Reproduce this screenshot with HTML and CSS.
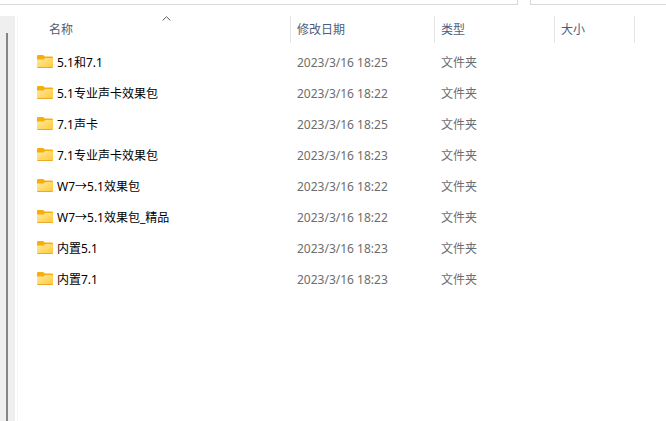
FILE: index.html
```html
<!DOCTYPE html>
<html lang="zh-CN">
<head>
  <meta charset="UTF-8">
  <meta name="viewport" content="width=device-width, initial-scale=1.0">
  <title>文件夹</title>
  <link rel="stylesheet" href="styles.css">
</head>
<body>
  <svg class="defs" aria-hidden="true">
    <defs>
      <linearGradient id="front" x1="0" y1="0" x2="1" y2="1">
        <stop offset="0" stop-color="#ffe9a0"/>
        <stop offset="1" stop-color="#ffc936"/>
      </linearGradient>
      <symbol id="folder" viewBox="0 0 16 13">
        <path fill="#f5ae0c" d="M0 1.2Q0 0 1.2 0H5.6Q6.3 0 6.8.6L7.8 1.6H14.8Q16 1.6 16 2.8V6H0Z"/>
        <path fill="url(#front)" d="M0 4.4H6Q6.6 4.4 7.1 3.9L7.6 3.4Q8 3 8.6 3H15Q16 3 16 4V11.8Q16 13 14.8 13H1.2Q0 13 0 11.8Z"/>
        <path fill="#e8a92c" d="M.1 12.1H15.9Q15.7 13 14.8 13H1.2Q.3 13 .1 12.1Z"/>
      </symbol>
    </defs>
  </svg>

  <header class="topbar">
    <div class="address"></div>
    <div class="search"></div>
  </header>

  <div class="window">
    <aside class="sidebar">
      <div class="thumb"></div>
    </aside>
    <main class="content">
      <table class="files">
        <colgroup>
          <col class="col-name">
          <col class="col-date">
          <col class="col-type">
          <col class="col-size">
          <col>
        </colgroup>
        <thead>
          <tr>
            <th class="name" aria-sort="ascending">
              <button type="button">名称</button>
              <svg class="sort" viewBox="0 0 9 5" aria-hidden="true"><path d="M.6 4.5L4.5.7L8.4 4.5"/></svg>
            </th>
            <th><button type="button">修改日期</button></th>
            <th><button type="button">类型</button></th>
            <th><button type="button">大小</button></th>
            <td></td>
          </tr>
        </thead>
        <tbody>
          <tr>
            <td class="name"><svg class="icon"><use href="#folder"/></svg>5.1和7.1</td>
            <td>2023/3/16 18:25</td>
            <td>文件夹</td>
            <td></td>
            <td></td>
          </tr>
          <tr>
            <td class="name"><svg class="icon"><use href="#folder"/></svg>5.1专业声卡效果包</td>
            <td>2023/3/16 18:22</td>
            <td>文件夹</td>
            <td></td>
            <td></td>
          </tr>
          <tr>
            <td class="name"><svg class="icon"><use href="#folder"/></svg>7.1声卡</td>
            <td>2023/3/16 18:25</td>
            <td>文件夹</td>
            <td></td>
            <td></td>
          </tr>
          <tr>
            <td class="name"><svg class="icon"><use href="#folder"/></svg>7.1专业声卡效果包</td>
            <td>2023/3/16 18:23</td>
            <td>文件夹</td>
            <td></td>
            <td></td>
          </tr>
          <tr>
            <td class="name"><svg class="icon"><use href="#folder"/></svg>W7→5.1效果包</td>
            <td>2023/3/16 18:22</td>
            <td>文件夹</td>
            <td></td>
            <td></td>
          </tr>
          <tr>
            <td class="name"><svg class="icon"><use href="#folder"/></svg>W7→5.1效果包_精品</td>
            <td>2023/3/16 18:22</td>
            <td>文件夹</td>
            <td></td>
            <td></td>
          </tr>
          <tr>
            <td class="name"><svg class="icon"><use href="#folder"/></svg>内置5.1</td>
            <td>2023/3/16 18:23</td>
            <td>文件夹</td>
            <td></td>
            <td></td>
          </tr>
          <tr>
            <td class="name"><svg class="icon"><use href="#folder"/></svg>内置7.1</td>
            <td>2023/3/16 18:23</td>
            <td>文件夹</td>
            <td></td>
            <td></td>
          </tr>
        </tbody>
      </table>
    </main>
  </div>
</body>
</html>
```
FILE: styles.css
```css
* {
  box-sizing: border-box;
}

body {
  margin: 0;
  min-height: 100vh;
  display: flex;
  flex-direction: column;
  background: #fff;
  color: #6d6d6d;
  font-family: "Noto Sans", "Noto Sans CJK SC", sans-serif;
  font-size: 12px;
  line-height: 18px;
}

.defs {
  position: absolute;
  width: 0;
  height: 0;
}

/* lower edge of the address and search boxes */
.topbar {
  display: flex;
  gap: 12px;
  height: 5px;
  margin-bottom: 11px;
}

.address,
.search {
  border-bottom: 1px solid #d9d9d9;
}

.address {
  flex: 1;
  border-right: 1px solid #d9d9d9;
}

.search {
  width: 136px;
  border-left: 1px solid #d9d9d9;
}

.window {
  flex: 1;
  display: flex;
}

.sidebar {
  display: flex;
  width: 15px;
  padding: 17px 0 0 6px;
  background: #efefef;
}

.thumb {
  width: 2px;
  background: #858585;
}

.content {
  flex: 1;
  margin-left: 2px;
  border-left: 1px solid #f5f5f5;
}

.files {
  width: 100%;
  table-layout: fixed;
  border-collapse: separate;
  border-spacing: 0;
}

.col-name {
  width: 273px;
}

.col-date {
  width: 144px;
}

.col-type {
  width: 120px;
}

.col-size {
  width: 80px;
}

.files th {
  position: relative;
  height: 27px;
  padding: 0 0 0 6px;
  border-right: 1px solid #e5e5e5;
  text-align: left;
}

.files th.name {
  padding-left: 31px;
}

.files th button {
  display: block;
  padding: 0;
  border: none;
  background: none;
  color: #4c607a;
  font: inherit;
  font-weight: normal;
  cursor: pointer;
}

.sort {
  position: absolute;
  top: 0;
  left: 25px;
  right: 0;
  width: 9px;
  height: 5px;
  margin: 0 auto;
  fill: none;
  stroke: #5a5a5a;
}

.files tbody::before {
  content: "";
  display: block;
  height: 4px;
}

.files tbody td {
  height: 31px;
  padding: 0 0 0 6px;
  white-space: nowrap;
}

.files tbody td.name {
  padding-left: 19px;
  color: #000;
}

.icon {
  width: 16px;
  height: 13px;
  margin-right: 4px;
  vertical-align: -1px;
}
```
